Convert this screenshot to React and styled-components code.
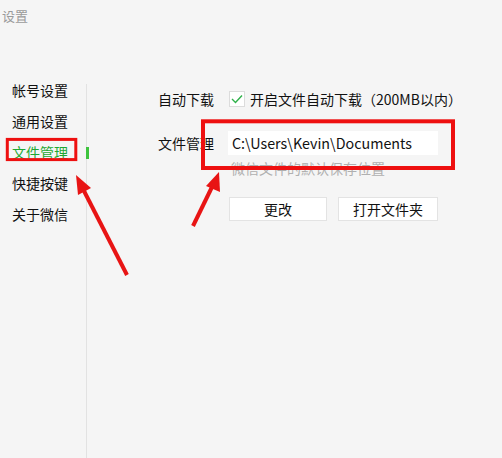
import React from "react";
import styled, { createGlobalStyle } from "styled-components";

const GlobalStyle = createGlobalStyle`
  html, body {
    margin: 0;
    padding: 0;
    background: #f5f5f5;
  }
  body {
    font-family: "Noto Sans CJK SC", "Noto Sans", sans-serif;
  }
`;

const navItems = ["帐号设置", "通用设置", "文件管理", "快捷按键", "关于微信"];

const App = () => {
    return (
        <Window>
            <GlobalStyle />
            <TitleBar>设置</TitleBar>
            <Body>
                <Nav>
                    {navItems.map((label) => (
                        <NavItem key={label} active={label === "文件管理"}>
                            {label}
                        </NavItem>
                    ))}
                </Nav>
                <Divider />
                <Content>
                    <Row>
                        <Label>自动下载</Label>
                        <CheckLine>
                            <CheckBox>
                                <svg width="12" height="10" viewBox="0 0 12 10">
                                    <path d="M1 5 L4.5 8.5 L11 1.5" fill="none" stroke="#2fb14a" strokeWidth="1.4" />
                                </svg>
                            </CheckBox>
                            <CheckText>开启文件自动下载（200MB以内）</CheckText>
                        </CheckLine>
                    </Row>
                    <PathRow>
                        <Label>文件管理</Label>
                        <Field>
                            <PathInput>C:\Users\Kevin\Documents</PathInput>
                            <Hint>微信文件的默认保存位置</Hint>
                        </Field>
                    </PathRow>
                    <Buttons>
                        <Button width={98}>更改</Button>
                        <Button width={100}>打开文件夹</Button>
                    </Buttons>
                </Content>
            </Body>

            {/* red annotations drawn over the screenshot */}
            <Annotations width="502" height="458" viewBox="0 0 502 458">
                <rect x="7.3" y="139.4" width="68.5" height="20.2" fill="none" stroke="#ee1010" strokeWidth="3" />
                <rect x="203" y="121.3" width="250" height="46.7" fill="none" stroke="#ee1010" strokeWidth="4" />
                <line x1="127" y1="275" x2="84" y2="191" stroke="#e81414" strokeWidth="4" />
                <polygon points="76,175 91,188 78,195" fill="#e81414" />
                <line x1="193" y1="226" x2="212" y2="187" stroke="#e81414" strokeWidth="4" />
                <polygon points="219,172 220,192 206,186" fill="#e81414" />
            </Annotations>
        </Window>
    );
};

const Window = styled.div`
    position: relative;
    width: 502px;
    height: 458px;
    display: flex;
    flex-direction: column;
    background: #f5f5f5;
    overflow: hidden;
`;

const TitleBar = styled.div`
    height: 32px;
    line-height: 32px;
    padding-left: 2px;
    font-size: 13px;
    color: #9a9a9a;
`;

const Body = styled.div`
    flex: 1;
    display: flex;
    margin-top: 43px;
`;

const Nav = styled.div`
    width: 86px;
    display: flex;
    flex-direction: column;
`;

const NavItem = styled.div`
    position: relative;
    height: 31px;
    line-height: 31px;
    padding-left: 12px;
    font-size: 14px;
    color: ${(p) => (p.active ? "#1fa832" : "#111")};
    &::after {
        content: "";
        display: ${(p) => (p.active ? "block" : "none")};
        position: absolute;
        right: -3px;
        top: 10px;
        width: 3px;
        height: 12px;
        background: #3ec43e;
    }
`;

const Divider = styled.div`
    width: 1px;
    margin-top: 9px;
    background: #e2e2e2;
`;

const Content = styled.div`
    flex: 1;
    padding: 12px 0 0 71px;
    display: flex;
    flex-direction: column;
`;

const Row = styled.div`
    display: flex;
    align-items: center;
    height: 24px;
`;

const PathRow = styled.div`
    display: flex;
    align-items: flex-start;
    margin-top: 20px;
`;

const Label = styled.div`
    width: 70px;
    font-size: 14px;
    line-height: 24px;
    color: #111;
`;

const CheckLine = styled.div`
    display: flex;
    align-items: center;
`;

const CheckBox = styled.div`
    box-sizing: border-box;
    width: 16px;
    height: 16px;
    margin-left: 1px;
    background: #ffffff;
    border: 1px solid #dcdcdc;
    display: flex;
    align-items: center;
    justify-content: center;
`;

const CheckText = styled.span`
    margin-left: 5px;
    font-size: 14px;
    color: #111;
`;

const Field = styled.div`
    display: flex;
    flex-direction: column;
`;

const PathInput = styled.div`
    width: 210px;
    height: 24px;
    box-sizing: border-box;
    padding-left: 4px;
    background: #ffffff;
    font-size: 14.3px;
    line-height: 24px;
    color: #111;
`;

const Hint = styled.div`
    margin-top: 3px;
    padding-left: 3px;
    font-size: 14px;
    line-height: 20px;
    color: #b0b0b0;
`;

const Buttons = styled.div`
    display: flex;
    gap: 11px;
    margin-top: 19px;
    padding-left: 71px;
`;

const Button = styled.div`
    width: ${(p) => p.width}px;
    height: 24px;
    box-sizing: border-box;
    background: #ffffff;
    border: 1px solid #e3e3e3;
    font-size: 14px;
    line-height: 22px;
    text-align: center;
    color: #111;
`;

const Annotations = styled.svg`
    position: absolute;
    left: 0;
    top: 0;
    pointer-events: none;
`;

export default App;
